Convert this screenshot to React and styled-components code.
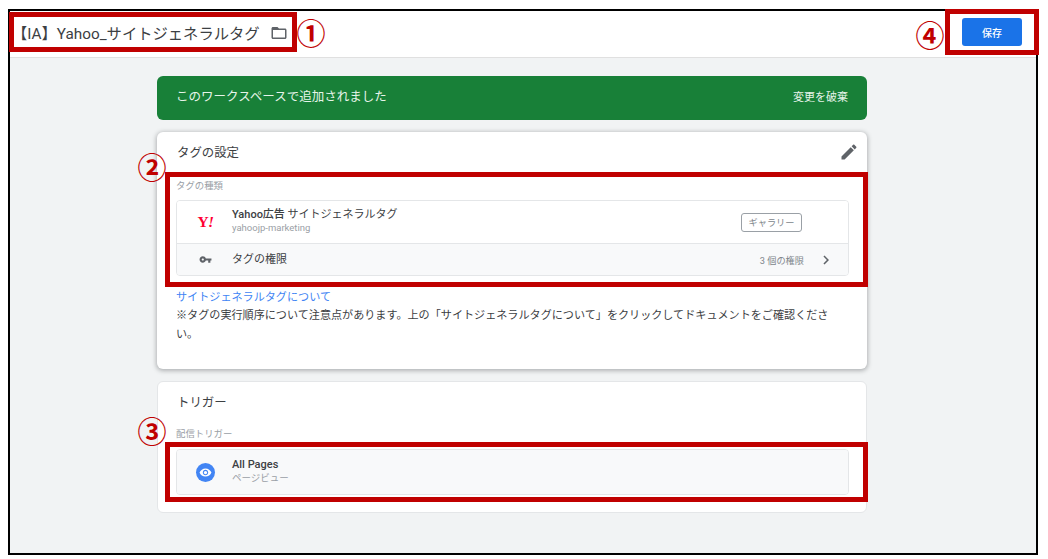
import React from "react";
import styled, { createGlobalStyle } from "styled-components";

const GlobalStyle = createGlobalStyle`
  html, body {
    margin: 0;
    padding: 0;
    background: #fff;
    font-family: Roboto, "Noto Sans CJK JP", sans-serif;
    color: #3c4043;
  }
`;

const Page = styled.div`
  position: relative;
  width: 1048px;
  height: 559px;
  overflow: hidden;
  padding: 9px 0 0 8px;
  box-sizing: border-box;
`;

const Frame = styled.div`
  width: 1030px;
  height: 546px;
  box-sizing: border-box;
  border: 2px solid #000;
  background: #f1f3f4;
  display: flex;
  flex-direction: column;
`;

const TopBar = styled.header`
  height: 47px;
  flex: none;
  box-sizing: border-box;
  background: #fff;
  border-bottom: 1px solid #e0e0e0;
  display: flex;
  align-items: center;
  justify-content: space-between;
  padding: 0 14px 0 2px;
`;

const TitleGroup = styled.div`
  display: flex;
  align-items: center;
  gap: 10px;
  margin-top: -3px;
`;

const Title = styled.h1`
  margin: -2px 0 0;
  font-size: 15.3px;
  font-weight: 400;
  color: #3c4043;
  white-space: nowrap;
`;

const SaveButton = styled.button`
  width: 60px;
  height: 28px;
  border: 0;
  border-radius: 3px;
  background: #1a73e8;
  color: #fff;
  font: 500 10px Roboto, "Noto Sans CJK JP", sans-serif;
  margin-top: -4px;
`;

const Content = styled.main`
  display: flex;
  flex-direction: column;
  gap: 12px;
  width: 710px;
  margin-left: 147px;
  padding-top: 18px;
`;

const Banner = styled.div`
  height: 44px;
  box-sizing: border-box;
  background: #188038;
  border-radius: 6px;
  color: #e6f4ea;
  display: flex;
  align-items: center;
  justify-content: space-between;
  padding: 0 19px 6px 19px;
  font-size: 12.5px;
`;

const BannerAction = styled.span`
  font-size: 11px;
  margin-top: 2px;
`;

const Card = styled.section`
  box-sizing: border-box;
  height: ${(p) => p.$height}px;
  background: #fff;
  border-radius: 6px;
  padding: 0 17px 0 18px;
  border: 1px solid #e4e6e8;
  box-shadow: ${(p) => (p.$raised ? "0 1px 4px 1px rgba(60, 64, 67, 0.35)" : "none")};
  ${(p) => p.$raised && "border-color: transparent;"}
`;

const CardHead = styled.div`
  height: ${(p) => p.$height}px;
  display: flex;
  align-items: center;
  justify-content: space-between;
  font-size: 12.4px;
  color: #3c4043;
  padding: 0 0 0 1px;
`;

const EditButton = styled.span`
  display: flex;
  margin-right: -10px;
`;

const FieldLabel = styled.div`
  font-size: 9.4px;
  line-height: 12px;
  color: #9aa0a6;
  margin: ${(p) => p.$top}px 0 ${(p) => p.$bottom}px;
`;

const ItemBox = styled.div`
  border: 1px solid #e4e6e8;
  border-radius: 4px;
  overflow: hidden;
`;

const Row = styled.div`
  height: ${(p) => p.$height}px;
  box-sizing: border-box;
  display: grid;
  grid-template-columns: 55px 1fr auto;
  align-items: center;
  background: ${(p) => (p.$muted ? "#f8f9fa" : "#fff")};
  border-top: ${(p) => (p.$divided ? "1px solid #e4e6e8" : "0")};
  padding-right: ${(p) => p.$right || 0}px;
`;

const IconCell = styled.div`
  display: flex;
  justify-content: center;
  padding-left: 2px;
`;

const YahooMark = styled.span`
  font: 700 15.5px "Liberation Serif", serif;
  color: #ff0033;
  letter-spacing: -0.5px;

  i {
    font-style: italic;
  }
`;

const EyeBadge = styled.span`
  width: 19px;
  height: 19px;
  border-radius: 50%;
  background: #4285f4;
  display: flex;
  align-items: center;
  justify-content: center;
`;

const TextStack = styled.div`
  margin-top: -2px;
`;

const ItemName = styled.div`
  font-size: 11px;
  line-height: 14px;
  font-weight: ${(p) => (p.$strong ? 500 : 400)};
  color: #3c4043;

  span {
    font-weight: 400;
  }
`;

const ItemSub = styled.div`
  font-size: 9.5px;
  line-height: 12px;
  color: #9aa0a6;
`;

const Chip = styled.span`
  display: block;
  width: 61px;
  height: 19px;
  box-sizing: border-box;
  border: 1px solid #9aa0a6;
  border-radius: 3px;
  font-size: 9.2px;
  line-height: 17px;
  text-align: center;
  color: #80868b;
`;

const RowEnd = styled.div`
  display: flex;
  align-items: center;
  gap: 13px;
  font-size: 9.2px;
  color: #80868b;
`;

const DocLink = styled.a`
  display: block;
  margin-top: 13px;
  font-size: 11.1px;
  line-height: 18px;
  color: #4285f4;
`;

const Note = styled.p`
  margin: 0;
  width: 660px;
  font-size: 11.1px;
  line-height: 18.5px;
  color: #3c4043;
`;

/* red call-outs drawn over the finished screen */
const Callout = styled.div`
  position: absolute;
  left: ${(p) => p.$x}px;
  top: ${(p) => p.$y}px;
  width: ${(p) => p.$w}px;
  height: ${(p) => p.$h}px;
  box-sizing: border-box;
  border: 5px solid #c00000;
`;

const CalloutNumber = styled.span`
  position: absolute;
  left: ${(p) => p.$x - 17}px;
  top: ${(p) => p.$y - 17}px;
  width: 34px;
  height: 34px;
  text-align: center;
  font: 700 29px/34px "Noto Sans CJK JP", sans-serif;
  color: #c00000;
`;

const Icon = ({ d, size = 16, color = "#5f6368" }) => (
  <svg width={size} height={size} viewBox="0 0 24 24" fill={color}>
    <path d={d} />
  </svg>
);

const icons = {
  folder: "M20 6h-8l-2-2H4c-1.1 0-1.99.9-1.99 2L2 18c0 1.1.9 2 2 2h16c1.1 0 2-.9 2-2V8c0-1.1-.9-2-2-2zm0 12H4V8h16v10z",
  pencil: "M3 17.25V21h3.75L17.81 9.94l-3.75-3.75L3 17.25zM20.71 7.04c.39-.39.39-1.02 0-1.41l-2.34-2.34c-.39-.39-1.02-.39-1.41 0l-1.83 1.83 3.75 3.75 1.83-1.83z",
  key: "M12.65 10C11.83 7.67 9.61 6 7 6c-3.31 0-6 2.69-6 6s2.69 6 6 6c2.61 0 4.83-1.67 5.65-4H17v4h4v-4h2v-4H12.65zM7 14c-1.1 0-2-.9-2-2s.9-2 2-2 2 .9 2 2-.9 2-2 2z",
  chevron: "M10 6L8.59 7.41 13.17 12l-4.58 4.59L10 18l6-6z",
  eye: "M12 4.5C7 4.5 2.73 7.61 1 12c1.73 4.39 6 7.5 11 7.5s9.27-3.11 11-7.5c-1.73-4.39-6-7.5-11-7.5zM12 17c-2.76 0-5-2.24-5-5s2.24-5 5-5 5 2.24 5 5-2.24 5-5 5zm0-8c-1.66 0-3 1.34-3 3s1.34 3 3 3 3-1.34 3-3-1.34-3-3-3z",
};

const callouts = [
  { x: 9, y: 12, w: 288, h: 40 },
  { x: 945, y: 9, w: 94, h: 46 },
  { x: 165, y: 172, w: 703, h: 115 },
  { x: 165, y: 442, w: 703, h: 60 },
];

const numbers = [
  { x: 311, y: 32, text: "①" },
  { x: 930, y: 34, text: "④" },
  { x: 152, y: 166, text: "②" },
  { x: 152, y: 430, text: "③" },
];

export default function App() {
  return (
    <>
      <GlobalStyle />
      <Page>
        <Frame>
          <TopBar>
            <TitleGroup>
              <Title>【IA】Yahoo_サイトジェネラルタグ</Title>
              <Icon d={icons.folder} size={18} />
            </TitleGroup>
            <SaveButton>保存</SaveButton>
          </TopBar>
          <Content>
            <Banner>
              <span>このワークスペースで追加されました</span>
              <BannerAction>変更を破棄</BannerAction>
            </Banner>
            <Card $raised $height={237}>
              <CardHead $height={38}>
                <span>タグの設定</span>
                <EditButton>
                  <Icon d={icons.pencil} size={20} />
                </EditButton>
              </CardHead>
              <FieldLabel $top={9} $bottom={8}>タグの種類</FieldLabel>
              <ItemBox>
                <Row $height={42} $right={46}>
                  <IconCell>
                    <YahooMark>Y<i>!</i></YahooMark>
                  </IconCell>
                  <TextStack>
                    <ItemName $strong>Yahoo広告 <span>サイトジェネラルタグ</span></ItemName>
                    <ItemSub>yahoojp-marketing</ItemSub>
                  </TextStack>
                  <Chip>ギャラリー</Chip>
                </Row>
                <Row $height={32} $muted $divided $right={13}>
                  <IconCell>
                    <Icon d={icons.key} size={13} />
                  </IconCell>
                  <ItemName>タグの権限</ItemName>
                  <RowEnd>
                    <span>3 個の権限</span>
                    <Icon d={icons.chevron} size={18} />
                  </RowEnd>
                </Row>
              </ItemBox>
              <DocLink>サイトジェネラルタグについて</DocLink>
              <Note>
                ※タグの実行順序について注意点があります。上の「サイトジェネラルタグについて」をクリックしてドキュメントをご確認ください。
              </Note>
            </Card>
            <Card $height={132}>
              <CardHead $height={40}>
                <span>トリガー</span>
              </CardHead>
              <FieldLabel $top={6} $bottom={9}>配信トリガー</FieldLabel>
              <ItemBox>
                <Row $height={44} $muted>
                  <IconCell>
                    <EyeBadge>
                      <Icon d={icons.eye} size={13} color="#fff" />
                    </EyeBadge>
                  </IconCell>
                  <TextStack>
                    <ItemName $strong>All Pages</ItemName>
                    <ItemSub>ページビュー</ItemSub>
                  </TextStack>
                </Row>
              </ItemBox>
            </Card>
          </Content>
        </Frame>
        {callouts.map((c) => (
          <Callout key={c.y} $x={c.x} $y={c.y} $w={c.w} $h={c.h} />
        ))}
        {numbers.map((n) => (
          <CalloutNumber key={n.text} $x={n.x} $y={n.y}>
            {n.text}
          </CalloutNumber>
        ))}
      </Page>
    </>
  );
}
